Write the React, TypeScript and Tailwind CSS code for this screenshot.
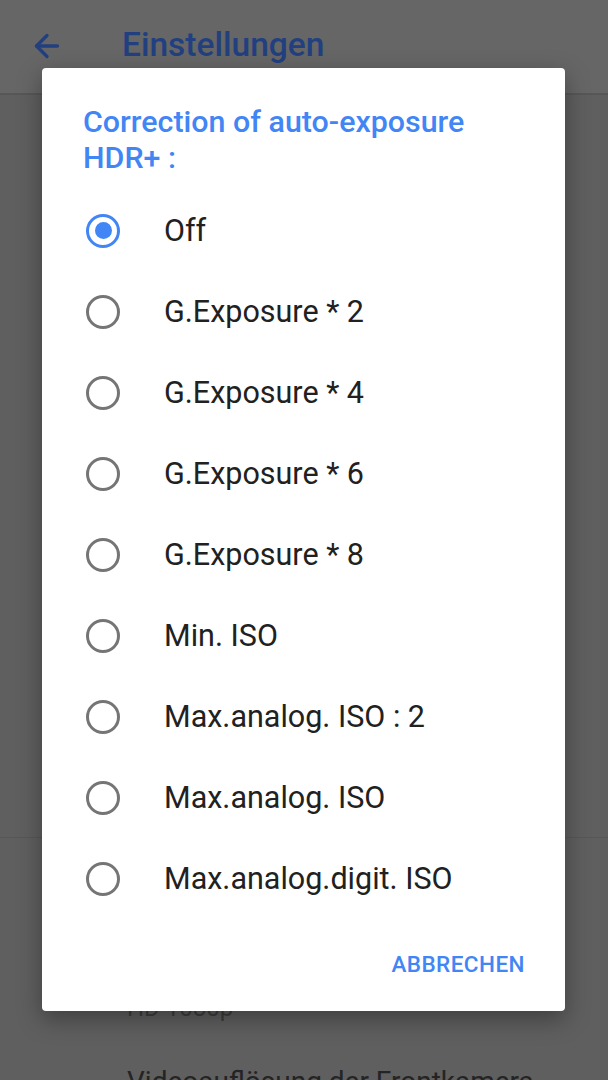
import React, { useState } from 'react';
import { ArrowLeft } from 'lucide-react';

const options = [
  'Off',
  'G.Exposure * 2',
  'G.Exposure * 4',
  'G.Exposure * 6',
  'G.Exposure * 8',
  'Min. ISO',
  'Max.analog. ISO : 2',
  'Max.analog. ISO',
  'Max.analog.digit. ISO',
];

const Radio: React.FC<{ checked: boolean }> = ({ checked }) => (
  <span
    className={`flex h-[34px] w-[34px] shrink-0 items-center justify-center rounded-full border-[3px] ${
      checked ? 'border-[#4285f4]' : 'border-[#757575]'
    }`}
  >
    {checked && <span className="h-[17px] w-[17px] rounded-full bg-[#4285f4]" />}
  </span>
);

export default function App() {
  const [selected, setSelected] = useState(0);

  return (
    <div
      className="relative h-[1080px] w-[608px] overflow-hidden bg-[#5f5f5f]"
      style={{ fontFamily: 'Roboto, "Noto Sans", sans-serif' }}
    >
      {/* page behind the dialog (dimmed) */}
      <div className="flex h-[95px] items-center border-b-2 border-[#575757] bg-[#666666] pb-[2px]">
        <ArrowLeft className="ml-[29px] text-[#22407f]" size={36} strokeWidth={2.2} />
        <h1 className="ml-[57px] text-[33.5px] font-medium text-[#22407f]">Einstellungen</h1>
      </div>
      <div className="h-[742px]" />
      <div className="h-px bg-[#575757]" />
      <div className="pl-[127px] pt-[152px] text-[24px] text-[#3d3d3d]">HD 1080p</div>
      <div className="pl-[127px] pt-[35px] text-[28px] text-[#242424]">Videoauflösung der Frontkamera</div>

      {/* modal dialog */}
      <div className="absolute left-[42px] top-[68px] w-[523px] rounded-[4px] bg-white shadow-[0_8px_24px_rgba(0,0,0,0.35)]">
        <h2 className="px-[41px] pt-[36px] text-[30.4px] font-medium leading-[36px] text-[#4285f4]">
          Correction of auto-exposure
          <br />
          HDR+ :
        </h2>
        <ul className="mt-[14px]">
          {options.map((label, i) => (
            <li
              key={label}
              onClick={() => setSelected(i)}
              className="flex h-[81px] cursor-pointer items-center pl-[44px]"
            >
              <Radio checked={selected === i} />
              <span className="ml-[44px] text-[30.5px] text-[#212121]">{label}</span>
            </li>
          ))}
        </ul>
        <div className="flex h-[92px] items-center justify-end pr-[40px]">
          <button className="text-[22.5px] font-medium tracking-[0.02em] text-[#4285f4]">ABBRECHEN</button>
        </div>
      </div>
    </div>
  );
}
